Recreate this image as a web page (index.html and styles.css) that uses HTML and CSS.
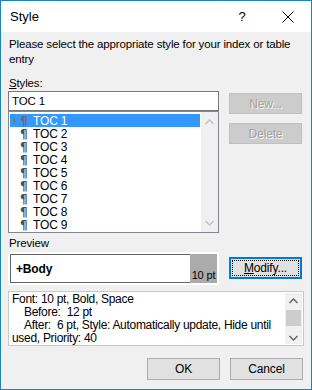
FILE: index.html
```html
<!DOCTYPE html>
<html>
<head>
<meta charset="utf-8">
<link rel="stylesheet" href="styles.css">
</head>
<body>
<div class="window">
  <div class="titlebar">
    <span class="title">Style</span>
    <span class="tb-help">?</span>
    <span class="tb-close">
      <svg width="12" height="12" viewBox="0 0 12 12"><path d="M0.5 0.5 L11.5 11.5 M11.5 0.5 L0.5 11.5" stroke="#000" stroke-width="1" fill="none"/></svg>
    </span>
  </div>
  <div class="content">
    <p class="intro">Please select the appropriate style for your index or table entry</p>
    <div class="label styles-label"><u>S</u>tyles:</div>
    <div class="styles-row">
      <div class="styles-col">
        <div class="input">TOC 1</div>
        <div class="list">
          <div class="items">
            <div class="item selected"><span class="arrow"></span><span class="pil">¶</span><span>TOC 1</span></div>
            <div class="item"><span class="pil">¶</span><span>TOC 2</span></div>
            <div class="item"><span class="pil">¶</span><span>TOC 3</span></div>
            <div class="item"><span class="pil">¶</span><span>TOC 4</span></div>
            <div class="item"><span class="pil">¶</span><span>TOC 5</span></div>
            <div class="item"><span class="pil">¶</span><span>TOC 6</span></div>
            <div class="item"><span class="pil">¶</span><span>TOC 7</span></div>
            <div class="item"><span class="pil">¶</span><span>TOC 8</span></div>
            <div class="item"><span class="pil">¶</span><span>TOC 9</span></div>
          </div>
          <div class="vscroll">
            <svg width="9" height="6" viewBox="0 0 9 6"><path d="M0.5 5 L4.5 1 L8.5 5" stroke="#c2c2c2" stroke-width="1.3" fill="none"/></svg>
            <svg width="9" height="6" viewBox="0 0 9 6"><path d="M0.5 1 L4.5 5 L8.5 1" stroke="#c2c2c2" stroke-width="1.3" fill="none"/></svg>
          </div>
        </div>
      </div>
      <div class="side-buttons">
        <div class="btn disabled">New...</div>
        <div class="btn disabled">Delete</div>
      </div>
    </div>
    <div class="label preview-label">Preview</div>
    <div class="preview-row">
      <div class="preview">
        <div class="preview-text">+Body</div>
        <div class="preview-size">10 pt</div>
      </div>
      <div class="btn default"><span class="focus"><u>M</u>odify...</span></div>
    </div>
    <div class="desc">
      <div class="desc-text">
        <div>Font: 10 pt, Bold, Space</div>
        <div class="ind">Before:&nbsp; 12 pt</div>
        <div class="ind">After:&nbsp; 6 pt, Style: Automatically update, Hide until</div>
        <div>used, Priority: 40</div>
      </div>
      <div class="desc-scroll">
        <svg width="9" height="6" viewBox="0 0 9 6"><path d="M0.5 5 L4.5 1 L8.5 5" stroke="#606060" stroke-width="1.3" fill="none"/></svg>
        <div class="thumb"></div>
        <svg width="9" height="6" viewBox="0 0 9 6"><path d="M0.5 1 L4.5 5 L8.5 1" stroke="#606060" stroke-width="1.3" fill="none"/></svg>
      </div>
    </div>
    <div class="footer">
      <div class="btn">OK</div>
      <div class="btn">Cancel</div>
    </div>
  </div>
</div>
</body>
</html>
```
FILE: styles.css
```css
* { box-sizing: border-box; }
html, body { margin: 0; padding: 0; }
body {
  width: 312px;
  height: 390px;
  font-family: "Liberation Sans", Arial, sans-serif;
  font-size: 11.5px;
  letter-spacing: -0.15px;
  color: #000;
}
.window {
  width: 312px;
  height: 390px;
  border: 1px solid #1886be;
  background: #f0f0f0;
  display: flex;
  flex-direction: column;
}
.titlebar {
  height: 31px;
  background: #fff;
  display: flex;
  align-items: center;
  padding-left: 9px;
  flex: none;
}
.title { font-size: 13px; letter-spacing: 0; flex: 1; }
.tb-help { width: 46px; text-align: center; font-size: 13px; }
.tb-close { width: 46px; display: flex; justify-content: center; align-items: center; }
.content {
  padding: 5px 7px 0 7px;
  display: flex;
  flex-direction: column;
}
.intro { margin: 0; line-height: 15px; padding-left: 1px; }
.label { line-height: 14px; padding-left: 1px; }
.styles-label { margin-top: 9px; }
.styles-row { display: flex; margin-top: 1px; }
.styles-col { width: 211px; display: flex; flex-direction: column; }
.input {
  height: 20px;
  background: #fff;
  border: 1px solid #7a7a7a;
  padding-left: 3px;
  line-height: 18px;
}
.list {
  height: 122px;
  border: 1px solid #828790;
  background: #fff;
  display: flex;
}
.items { flex: 1; padding: 2px 1px; }
.item {
  height: 13px;
  line-height: 12px;
  display: flex;
  align-items: center;
  padding-left: 10px;
  font-size: 12px;
  overflow: hidden;
}
.item span { line-height: 12px; }
.item.selected { background: #3399ff; color: #fff; position: relative; }
.arrow {
  position: absolute;
  left: 3px;
  top: 3px;
  width: 0; height: 0;
  border-left: 4px solid #7a7a7a;
  border-top: 4px solid transparent;
  border-bottom: 4px solid transparent;
}
.pil { color: #505050; width: 13px; font-family: "DejaVu Sans", sans-serif; font-size: 12px; font-weight: bold; flex: none; }
.selected .pil { color: #6a6a6a; }
.vscroll {
  width: 17px;
  background: #f0f0f0;
  display: flex;
  flex-direction: column;
  justify-content: space-between;
  align-items: center;
  padding: 7px 0 6px;
}
.side-buttons {
  margin-left: 10px;
  display: flex;
  flex-direction: column;
  gap: 9px;
  padding-top: 2px;
}
.btn {
  width: 73px;
  height: 21px;
  background: #e1e1e1;
  border: 1px solid #adadad;
  display: flex;
  align-items: center;
  justify-content: center;
  font-size: 12px;
}
.btn.disabled {
  background: #cccccc;
  border-color: #bfbfbf;
  color: #a3a3a3;
  text-shadow: 1px 1px 0 #f4f4f4;
}
.preview-label { margin-top: 3px; }
.preview-row { display: flex; margin-top: 2px; align-items: flex-start; }
.preview {
  width: 211px;
  height: 33px;
  border: 2px solid #fff;
  display: flex;
}
.preview-text {
  flex: 1;
  background: #fff;
  border: 1px solid #646464;
  border-right: none;
  font-weight: bold;
  font-size: 12px;
  padding-left: 5px;
  display: flex;
  align-items: center;
  padding-top: 1px;
}
.preview-size {
  width: 27px;
  background: #ababab;
  font-size: 11px;
  display: flex;
  align-items: flex-end;
  justify-content: center;
  padding-bottom: 2px;
}
.btn.default {
  margin-left: 10px;
  margin-top: 5px;
  height: 22px;
  border: 2px solid #0078d7;
  padding: 1px;
}
.focus {
  width: 100%;
  height: 100%;
  border: 1px dotted #000;
  display: flex;
  align-items: center;
  justify-content: center;
}
.desc {
  margin-top: 6px;
  width: 296px;
  height: 55px;
  border: 1px solid #c8c8c8;
  background: #fff;
  display: flex;
  padding: 0 1px;
}
.desc-text { flex: 1; min-width: 0; line-height: 13px; padding-left: 2px; padding-top: 1px; white-space: nowrap; font-size: 12px; letter-spacing: -0.3px; }
.ind { padding-left: 12px; }
.desc-scroll {
  width: 17px;
  flex: none;
  margin: 1px 0;
  background: #f0f0f0;
  display: flex;
  flex-direction: column;
  align-items: center;
  padding-top: 5px;
}
.thumb { width: 15px; height: 16px; background: #cdcdcd; margin: 6px 0 9px; }
.footer {
  display: flex;
  justify-content: flex-end;
  gap: 10px;
  margin-top: 12px;
  padding-right: 1px;
}
.footer .btn { height: 22px; }
```
